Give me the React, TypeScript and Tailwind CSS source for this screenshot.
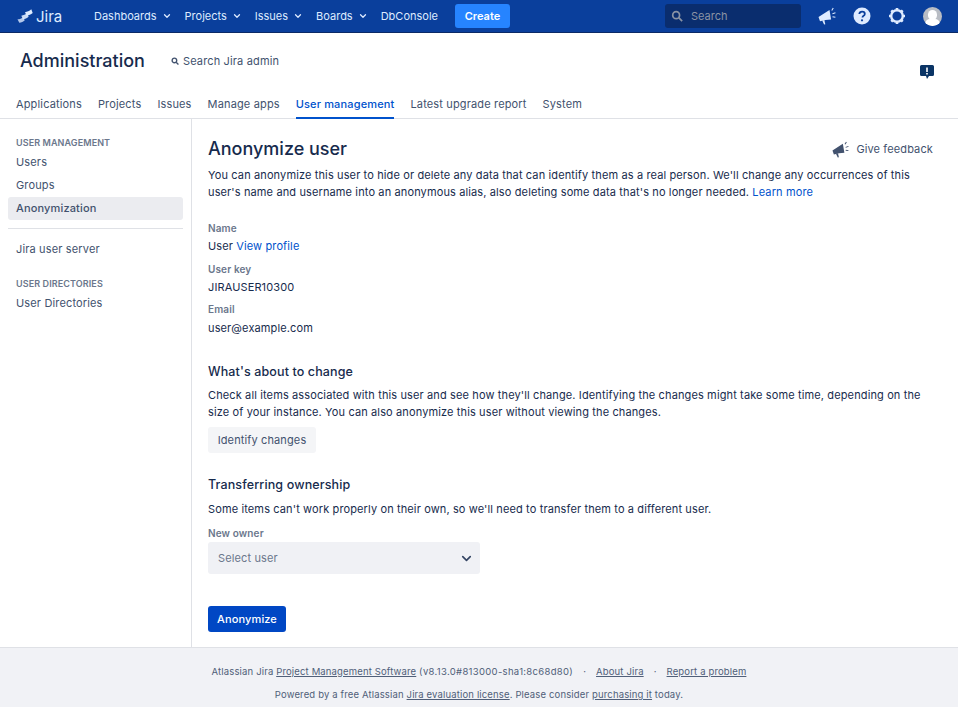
import { ChevronDown } from 'lucide-react';

const NAV = ['Dashboards', 'Projects', 'Issues', 'Boards'];
const TABS = ['Applications', 'Projects', 'Issues', 'Manage apps', 'User management', 'Latest upgrade report', 'System'];

function Megaphone({ className }: { className?: string }) {
  return (
    <svg viewBox="0 0 18 18" className={className} fill="currentColor">
      <path d="M.5 10 11.500 3l1.600 9.500-5.600.4-5.500 1.400z" />
      <path d="M4.200 13.500l2.100-.5 1 4.300-1.200.3z" />
      <path d="M13.300 3.300 14.800.8l.9.5-1.500 2.500zM14.300 6.300l3-1 .3.9-3 1zM14.600 9.200l2.900.5-.2 1-2.900-.5z" />
    </svg>
  );
}

function Label({ children }: { children: string }) {
  return <div className="text-[10px] leading-[14px] font-semibold text-[#6b778c]">{children}</div>;
}

export default function App() {
  return (
    <div className="flex h-[707px] flex-col overflow-hidden bg-white font-['Inter',sans-serif] text-[11px] tracking-[0.15px] text-[#172b4d]">
      {/* Top bar */}
      <header className="flex h-[33px] shrink-0 items-center border-b border-[#0b2a66] bg-[#0a3f9c] pr-4 pl-4 tracking-normal text-[#deebff]">
        <div className="flex w-[78px] items-center">
          <svg viewBox="0 0 16 15" className="ml-[1px] h-[15px] w-[16px]" fill="#deebff">
            <path d="M8 3.200c2.200-.2 4.300-1.200 6.300-2.900l1.400 3.800c-1.800 1.500-3.800 2.400-6 2.700z" />
            <path d="M4.300 6.700c2.200-.2 4.300-1.100 6-2.600l1.300 3.600c-1.600 1.300-3.500 2.200-5.600 2.500z" opacity=".9" />
            <path d="M.5 10.300c2.200-.2 4.200-1 5.900-2.400l1.300 3.500c-1.400 1.200-3.200 2-5.400 2.400z" opacity=".8" />
          </svg>
          <span className="ml-[3px] text-[15px] leading-none font-normal">Jira</span>
        </div>
        <nav className="flex items-center gap-[13px]">
          {NAV.map((n) => (
            <span key={n} className="flex items-center gap-[5px]">
              {n}
              <ChevronDown className="size-[10px]" strokeWidth={3} />
            </span>
          ))}
          <span>DbConsole</span>
        </nav>
        <button className="ml-[17px] h-[24px] w-[55px] rounded-[3px] bg-[#2684ff] font-semibold text-white">Create</button>
        <div className="ml-auto flex h-[24px] w-[136px] items-center rounded-[3px] bg-[#0a2d6e] pl-[6px] text-[#8993a4]">
          <svg viewBox="0 0 14 14" className="size-[12px]" fill="none" stroke="currentColor" strokeWidth="2">
            <circle cx="6" cy="6" r="4" />
            <path d="m9 9 4 4" />
          </svg>
          <span className="ml-[8px]">Search</span>
        </div>
        <Megaphone className="ml-[17px] size-[18px]" />
        <svg viewBox="0 0 18 18" className="ml-[17px] size-[18px]">
          <circle cx="9" cy="9" r="8.500" fill="#deebff" />
          <path d="M6.300 7c.2-1.600 1.300-2.400 2.800-2.400s2.700.9 2.700 2.300c0 1.200-.7 1.700-1.500 2.200-.6.400-.8.700-.8 1.300" fill="none" stroke="#0a3f9c" strokeWidth="1.800" />
          <circle cx="9" cy="13.300" r="1.100" fill="#0a3f9c" />
        </svg>
        <svg viewBox="0 0 18 18" className="ml-[17px] size-[18px]" fill="none" stroke="#deebff">
          <circle cx="9" cy="9" r="5.800" strokeWidth="2.400" />
          <path d="M9 1v2M9 15v2M1 9h2M15 9h2M3.300 3.300l1.500 1.500M13.200 13.200l1.500 1.500M14.700 3.300l-1.500 1.500M4.800 13.200l-1.500 1.500" strokeWidth="2.600" />
        </svg>
        <div className="relative ml-[17px] size-[19px] overflow-hidden rounded-full bg-[#b9bdc4]">
          <div className="absolute top-[3px] left-[5px] h-[10px] w-[9px] rounded-full bg-white" />
          <div className="absolute top-[12px] left-[2px] h-[10px] w-[15px] rounded-full bg-white" />
        </div>
      </header>

      {/* Admin header */}
      <div className="relative h-[86px] shrink-0 border-b border-[#dfe1e6]">
        <div className="flex items-center pt-[15px] pl-5">
          <h1 className="text-[18px] leading-[26px] font-medium tracking-normal">Administration</h1>
          <div className="ml-[26px] flex items-center gap-[4px] text-[#42526e]">
            <svg viewBox="0 0 14 14" className="size-[8px]" fill="none" stroke="currentColor" strokeWidth="2.400">
              <circle cx="6" cy="6" r="4" />
              <path d="m9 9 4 4" />
            </svg>
            Search Jira admin
          </div>
        </div>
        <svg viewBox="0 0 14 14" className="absolute top-[32px] right-[24px] size-[14px]">
          <path d="M1.500 0h11A1.500 1.500 0 0 1 14 1.500v8A1.500 1.500 0 0 1 12.500 11H9l-2 3-1-3H1.500A1.500 1.500 0 0 1 0 9.500v-8A1.500 1.500 0 0 1 1.500 0z" fill="#0a3465" />
          <path d="M6.200 2.500h1.600v4.500H6.200zM6.200 8h1.600v1.500H6.200z" fill="#fff" />
        </svg>
        <nav className="absolute bottom-[-1px] left-4 flex gap-4 text-[#42526e]">
          {TABS.map((t) => (
            <span
              key={t}
              className={
                t === 'User management'
                  ? 'border-b-2 border-[#0052cc] pb-[5px] leading-[16px] font-medium text-[#0052cc]'
                  : 'pb-[7px] leading-[16px]'
              }
            >
              {t}
            </span>
          ))}
        </nav>
      </div>

      <div className="flex min-h-0 flex-1">
        {/* Sidebar */}
        <aside className="w-[192px] shrink-0 border-r border-[#dfe1e6] px-2 pt-[18px] text-[#42526e]">
          <div className="mb-[2px] px-2 text-[9px] leading-[12px] font-semibold tracking-[0.1px] text-[#6b778c]">USER MANAGEMENT</div>
          <div className="flex h-[23px] items-center px-2">Users</div>
          <div className="flex h-[23px] items-center px-2">Groups</div>
          <div className="flex h-[23px] items-center rounded-[3px] bg-[#ebecf0] px-2 font-medium">Anonymization</div>
          <div className="mt-[8px] border-t border-[#dfe1e6]" />
          <div className="mt-[9px] flex h-[23px] items-center px-2">Jira user server</div>
          <div className="mt-[17px] mb-[2px] px-2 text-[9px] leading-[12px] font-semibold tracking-[0.1px] text-[#6b778c]">USER DIRECTORIES</div>
          <div className="flex h-[23px] items-center px-2">User Directories</div>
        </aside>

        {/* Main */}
        <main className="min-w-0 flex-1 pt-[18px] pr-[25px] pl-4 leading-[17px] tracking-[0.125px]">
          <div className="flex items-center justify-between">
            <h2 className="text-[18px] leading-[24px] font-medium tracking-normal">Anonymize user</h2>
            <div className="flex items-center gap-[7px] text-[#42526e]">
              <Megaphone className="size-[17px]" />
              Give feedback
            </div>
          </div>
          <p className="mt-[6px] leading-[16.500px]">
            You can anonymize this user to hide or delete any data that can identify them as a real person. We'll change any occurrences of this user's name and username into an anonymous alias, also deleting some data that's no longer needed. <span className="text-[#0052cc]">Learn more</span>
          </p>

          <div className="mt-[21px]"><Label>Name</Label></div>
          <div className="mt-[3px]">User <span className="text-[#0052cc]">View profile</span></div>
          <div className="mt-[7px]"><Label>User key</Label></div>
          <div className="mt-[3px]">JIRAUSER10300</div>
          <div className="mt-[6px]"><Label>Email</Label></div>
          <div className="mt-[4px]">user@example.com</div>

          <h3 className="mt-[26px] text-[12.500px] leading-[18px] font-medium">What's about to change</h3>
          <p className="mt-[6px] leading-[16.500px]">
            Check all items associated with this user and see how they'll change. Identifying the changes might take some time, depending on the size of your instance. You can also anonymize this user without viewing the changes.
          </p>
          <button className="mt-[7px] h-[26px] w-[108px] rounded-[3px] bg-[#f4f5f7] text-[#42526e]">Identify changes</button>

          <h3 className="mt-[23px] text-[12.500px] leading-[18px] font-medium">Transferring ownership</h3>
          <p className="mt-[7px]">Some items can't work properly on their own, so we'll need to transfer them to a different user.</p>
          <div className="mt-[8px]"><Label>New owner</Label></div>
          <div className="mt-[2px] flex h-[32px] w-[272px] items-center justify-between rounded-[3px] bg-[#f0f1f5] pr-[6px] pl-[10px] text-[#6b778c]">
            Select user
            <ChevronDown className="size-[15px] text-[#344563]" strokeWidth={2.600} />
          </div>
          <button className="mt-[32px] h-[26px] w-[78px] rounded-[3px] bg-[#0047c4] font-medium text-white">Anonymize</button>
        </main>
      </div>

      {/* Footer */}
      <footer className="h-[60px] shrink-0 border-t border-[#dfe1e6] bg-[#f1f2f6] pt-[17px] text-center text-[9.500px] leading-[14px] text-[#505f79]">
        <div>
          Atlassian Jira <span className="underline">Project Management Software</span> <span className="tracking-[0.32px]">(v8.13.0#813000-sha1:8c68d80)</span>
          <span className="mx-[10px]">·</span>
          <span className="underline">About Jira</span>
          <span className="mx-[10px]">·</span>
          <span className="underline">Report a problem</span>
        </div>
        <div className="mt-[9px]">
          Powered by a free Atlassian <span className="underline">Jira evaluation license</span>. Please consider <span className="underline">purchasing it</span> today.
        </div>
      </footer>
    </div>
  );
}
